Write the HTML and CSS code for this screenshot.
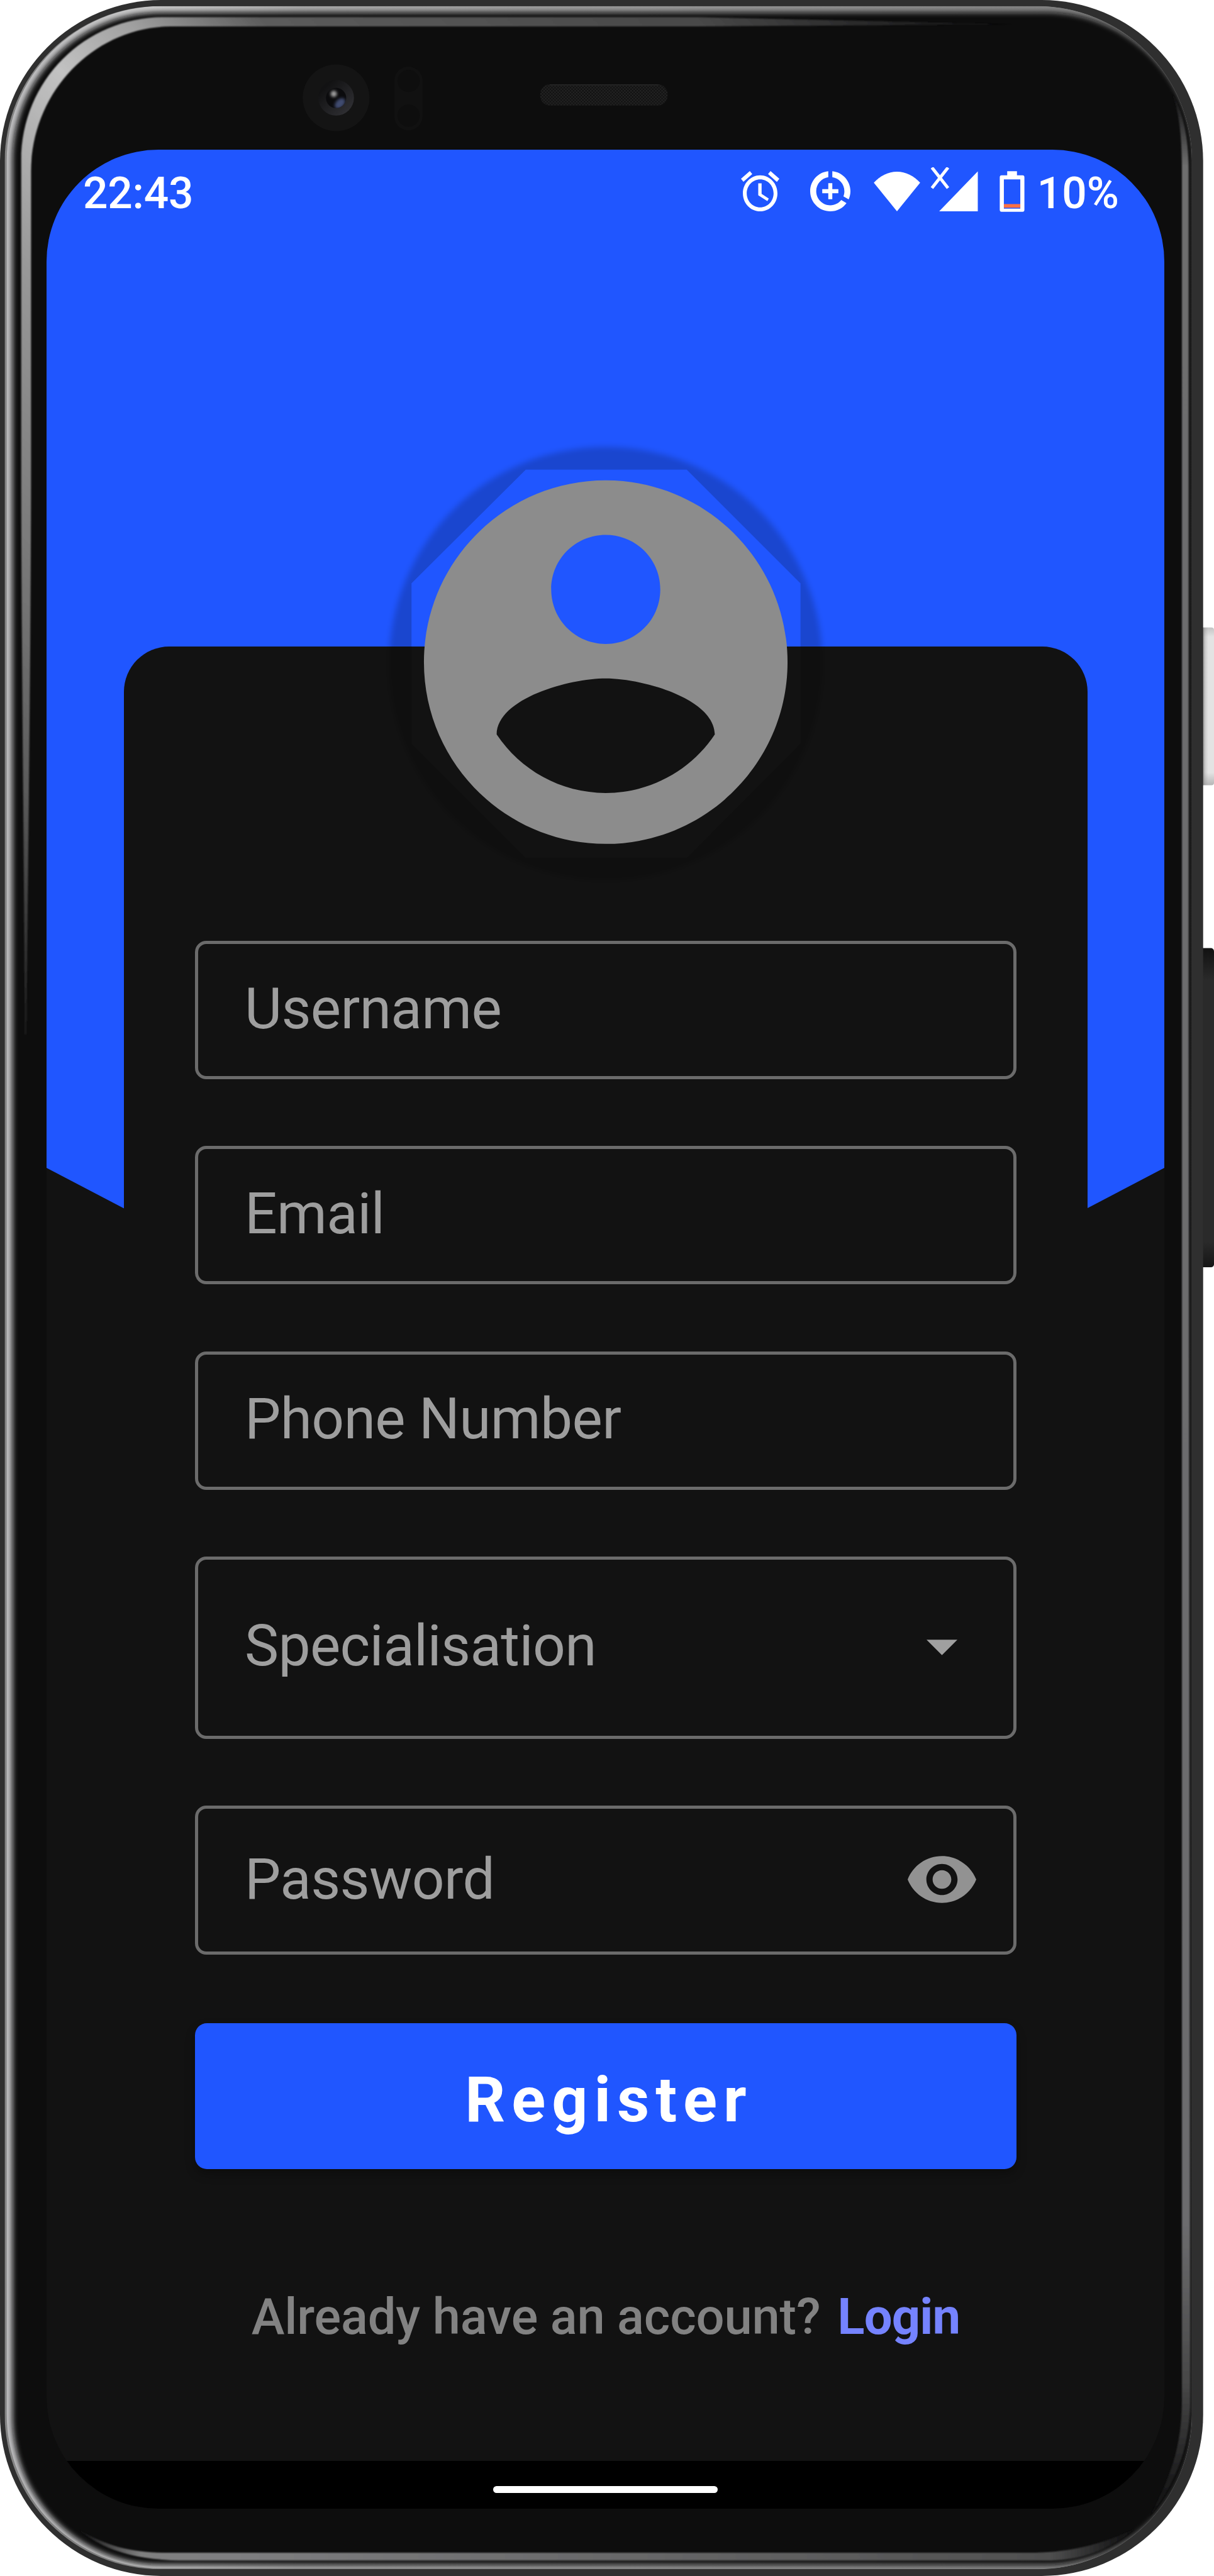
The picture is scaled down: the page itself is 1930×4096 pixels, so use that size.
FILE: index.html
```html
<!DOCTYPE html>
<html lang="en">
<head>
<meta charset="utf-8">
<title>Register</title>
<link rel="stylesheet" href="styles.css">
</head>
<body>
<div class="phone">
  <svg class="device" viewBox="0 0 2346 4980" preserveAspectRatio="none" aria-hidden="true">
    <defs>
      <linearGradient id="power" x1="2325" x2="2338" y1="0" y2="0" gradientUnits="userSpaceOnUse">
        <stop offset="0" stop-color="#9c9c9c"/><stop offset=".35" stop-color="#cdcdcd"/><stop offset=".75" stop-color="#e3e3e3"/>
      </linearGradient>
      <linearGradient id="powerEnds" x1="0" x2="0" y1="0" y2="1">
        <stop offset="0" stop-color="#888" stop-opacity=".35"/><stop offset=".06" stop-color="#888" stop-opacity="0"/>
        <stop offset=".92" stop-color="#888" stop-opacity="0"/><stop offset="1" stop-color="#888" stop-opacity=".5"/>
      </linearGradient>
      <linearGradient id="volume" x1="0" x2="0" y1="0" y2="1">
        <stop offset="0" stop-color="#111"/><stop offset=".1" stop-color="#2a2a2a"/><stop offset=".92" stop-color="#2a2a2a"/><stop offset="1" stop-color="#151515"/>
      </linearGradient>
      <linearGradient id="rim" x1="9" x2="2304" y1="0" y2="0" gradientUnits="userSpaceOnUse">
        <stop offset="0" stop-color="#bdbdbf"/><stop offset=".12" stop-color="#c8c8c8"/><stop offset=".25" stop-color="#a8a8a8"/><stop offset="1" stop-color="#7c7c7c"/>
      </linearGradient>
      <linearGradient id="bevelA" x1="50" y1="2000" x2="1960" y2="44" gradientUnits="userSpaceOnUse">
        <stop offset="0" stop-color="#1c1c1c"/><stop offset=".12" stop-color="#5a5a5a"/><stop offset=".21" stop-color="#727272"/><stop offset=".39" stop-color="#999"/>
        <stop offset=".505" stop-color="#c2c2c2"/><stop offset=".563" stop-color="#a0a0a0"/><stop offset=".63" stop-color="#5c5c5c"/>
        <stop offset=".845" stop-color="#484848"/><stop offset="1" stop-color="#0d0d0e"/>
      </linearGradient>
      <linearGradient id="bevelR" x1="0" y1="180" x2="0" y2="4864" gradientUnits="userSpaceOnUse">
        <stop offset="0" stop-color="#0d0d0e"/><stop offset=".03" stop-color="#6e6e6e"/><stop offset=".88" stop-color="#6c6c6e"/>
        <stop offset=".945" stop-color="#484848"/><stop offset="1" stop-color="#0d0d0e"/>
      </linearGradient>
      <linearGradient id="bevelB" x1="150" y1="0" x2="2190" y2="0" gradientUnits="userSpaceOnUse">
        <stop offset="0" stop-color="#0d0d0e"/><stop offset=".06" stop-color="#808080"/><stop offset=".15" stop-color="#7e7e80"/>
        <stop offset=".92" stop-color="#505050"/><stop offset="1" stop-color="#0d0d0e"/>
      </linearGradient>
      <linearGradient id="lens" x1="0" y1="0" x2="1" y2="1">
        <stop offset=".2" stop-color="#121213"/><stop offset=".9" stop-color="#303034"/>
      </linearGradient>
      <pattern id="mesh" width="6" height="6" patternUnits="userSpaceOnUse">
        <rect width="6" height="6" fill="#111"/><rect width="3" height="3" fill="#232323"/><rect x="3" y="3" width="3" height="3" fill="#232323"/>
      </pattern>
      <filter id="soft8" x="-5%" y="-5%" width="110%" height="110%"><feGaussianBlur stdDeviation="5"/></filter>
      <filter id="soft1" x="-5%" y="-5%" width="110%" height="110%"><feGaussianBlur stdDeviation="1"/></filter>
      <filter id="glow" x="-80%" y="-80%" width="260%" height="260%"><feGaussianBlur stdDeviation="2.5"/></filter>
      <clipPath id="rimClip"><rect x="9" y="12" width="2294.500" height="4955" rx="300"/></clipPath>
      <clipPath id="pupil"><circle cx="649.500" cy="189.500" r="19.500"/></clipPath>
    </defs>

    <!-- side keys -->
    <rect x="2318" y="1213" width="28" height="305" rx="5" fill="url(#power)"/>
    <rect x="2318" y="1213" width="28" height="305" rx="5" fill="url(#powerEnds)"/>
    <rect x="2318" y="1833" width="28" height="617" rx="6" fill="url(#volume)"/>

    <!-- body and polished rim -->
    <rect width="2325" height="4980" rx="312" fill="#2f2f2f"/>
    <g clip-path="url(#rimClip)">
      <rect x="9" y="12" width="2294.500" height="4955" fill="#858585"/>
      <rect x="13" y="12" width="2310" height="4953" rx="298" fill="url(#rim)"/>
      <rect x="24" y="24" width="2283" height="4934" rx="286" fill="#0d0d0e" filter="url(#soft8)"/>
    </g>

    <!-- inner bevel reflections -->
    <g filter="url(#soft1)">
      <path fill="url(#bevelA)" d="M48 2000C46 1600 41 1200 41 900V310C41 155 165 33 316 33H1350L1960 47L1350 51H330C181 52 60 178 60 332V900C60 1200 55 1600 51 2000Z"/>
      <path fill="url(#bevelR)" d="M2265 180C2280 220 2284 270 2284 330V4640C2284 4730 2262 4790 2221 4866C2280 4790 2300 4720 2300 4640L2297 2000V330C2297 260 2285 215 2265 180Z"/>
      <path fill="url(#bevelB)" d="M152 4890C205 4922 255 4935 320 4935H1988C2070 4935 2130 4918 2192 4889C2140 4932 2090 4950 2020 4950H357C275 4950 205 4935 152 4890Z"/>
    </g>

    <!-- camera, sensors, earpiece -->
    <circle cx="649.500" cy="189" r="64.500" fill="#141414"/>
    <circle cx="649.500" cy="189" r="34.500" fill="url(#lens)"/>
    <circle cx="649.500" cy="189.500" r="19.500" fill="#0b0b0d"/>
    <g clip-path="url(#pupil)">
      <ellipse cx="657" cy="200" rx="12" ry="8" transform="rotate(-45 657 200)" fill="#414b70" filter="url(#glow)"/>
      <circle cx="645" cy="181.500" r="6" fill="#a0a0a0" filter="url(#glow)"/>
    </g>
    <rect x="762" y="129" width="54.500" height="123" rx="27" fill="#111"/>
    <circle cx="789.500" cy="156.500" r="21.500" fill="#0e0e0e"/>
    <circle cx="789.500" cy="223.500" r="21.500" fill="#0e0e0e"/>
    <rect x="1044" y="163" width="246" height="41" rx="19" fill="url(#mesh)"/>
    <path d="M1062 164H1272" stroke="#2a2a2a" stroke-width="1.500"/>
  </svg>

  <main class="screen">
    <div class="backdrop"></div>

    <header class="status">
      <span class="clock">22:43</span>
      <div class="indicators">
        <svg class="ic-alarm" viewBox="2 1.860 20 20.140" preserveAspectRatio="none"><path d="M22 5.720l-4.600-3.860-1.290 1.530 4.600 3.860L22 5.720zM7.880 3.390L6.600 1.860 2 5.710l1.290 1.530 4.590-3.850zM12.500 8H11v6l4.750 2.850.750-1.230-3.750-2.370V8zM12 4c-4.970 0-9 4.030-9 9s4.020 9 9 9c4.970 0 9-4.030 9-9s-4.030-9-9-9zm0 16c-3.870 0-7-3.130-7-7s3.130-7 7-7 7 3.130 7 7-3.130 7-7 7z"/></svg>
        <svg class="ic-saver" viewBox="2 2 20 20"><path d="M13 2.050v3.030c3.390.490 6 3.390 6 6.920 0 .900-.180 1.750-.480 2.540l2.600 1.530c.560-1.240.880-2.620.880-4.070 0-5.180-3.950-9.450-9-9.950zM12 19c-3.870 0-7-3.130-7-7 0-3.530 2.610-6.430 6-6.920V2.050c-5.060.500-9 4.760-9 9.950 0 5.520 4.470 10 9.990 10 3.310 0 6.240-1.610 8.060-4.090l-2.600-1.530C16.170 17.980 14.210 19 12 19zM13 8h-2v3H8v2h3v3h2v-3h3v-2h-3z"/></svg>
        <svg class="ic-wifi" viewBox="1688 331 90 77"><path d="M1733 408L1688 352.500C1700 339 1716 331 1733 331S1766 339 1778 352.500Z"/></svg>
        <svg class="ic-signal" viewBox="1797 324 92 85"><path d="M1814 409L1888.500 332V409Z"/><path class="cross" d="M1800 324.500L1831 364M1831 324.500L1800 364"/></svg>
        <svg class="ic-battery" viewBox="1931 330 49 79"><path fill-rule="evenodd" d="M1946 330H1965V338H1976Q1979.500 338 1979.500 342V405Q1979.500 409 1976 409H1935Q1931.500 409 1931.500 405V342Q1931.500 338 1935 338H1946ZM1939.500 346V403H1971.500V346Z"/><path class="low" d="M1939.500 394H1971.500V401H1939.500Z"/></svg>
        <span class="level">10%</span>
      </div>
    </header>

    <form class="card">
      <svg class="avatar" viewBox="740 850 861 861">
        <defs>
          <filter id="avatarBlur"><feGaussianBlur stdDeviation="6"/></filter>
          <clipPath id="outsideOctagon"><path clip-rule="evenodd" d="M730 840H1611V1731H730ZM1016 908L795 1128V1438L1016 1659H1327L1547 1438V1128L1327 908Z"/></clipPath>
        </defs>
        <g clip-path="url(#outsideOctagon)"><circle cx="1170.500" cy="1283" r="419" fill="#000" fill-opacity=".19" filter="url(#avatarBlur)"/></g>
        <path fill="#8c8c8c" transform="translate(748.700 858.500) scale(35.150)" d="M12 2C6.480 2 2 6.480 2 12s4.480 10 10 10 10-4.480 10-10S17.520 2 12 2zm0 3c1.660 0 3 1.340 3 3s-1.340 3-3 3-3-1.340-3-3 1.340-3 3-3zm0 14.200c-2.500 0-4.710-1.280-6-3.220.030-1.990 4-3.080 6-3.080 1.990 0 5.970 1.090 6 3.080-1.290 1.940-3.500 3.220-6 3.220z"/>
      </svg>

      <div class="fields">
        <div class="field">Username</div>
        <div class="field">Email</div>
        <div class="field">Phone Number</div>
        <div class="field select">Specialisation
          <svg class="caret" viewBox="0 0 10 5"><path d="M0 0L5 5L10 0Z"/></svg>
        </div>
        <div class="field password">Password
          <svg class="eye" viewBox="1 4.500 22 15"><path d="M12 4.500C7 4.500 2.730 7.610 1 12c1.730 4.390 6 7.500 11 7.500s9.270-3.110 11-7.500c-1.730-4.390-6-7.500-11-7.500zM12 17c-2.760 0-5-2.240-5-5s2.240-5 5-5 5 2.240 5 5-2.240 5-5 5zm0-8c-1.660 0-3 1.340-3 3s1.340 3 3 3 3-1.340 3-3-1.340-3-3-3z"/></svg>
        </div>
      </div>

      <button class="register" type="button">Register</button>
      <p class="signin"><span>Already have an account?</span><a class="login">Login</a></p>
    </form>

    <nav class="gesture"><span class="pill"></span></nav>
  </main>
</div>
</body>
</html>
```

FILE: styles.css
```css
* { box-sizing: border-box; }

body {
  margin: 0;
  background: #fff;
  font-family: Roboto, "Noto Sans", sans-serif;
}

.phone {
  display: grid;
  width: 1930px;
  height: 4096px;
  overflow: hidden;
}

.device,
.screen { grid-area: 1 / 1; }

.device {
  display: block;
  width: 1930px;
  height: 4096px;
}

.screen {
  position: relative;
  display: flex;
  flex-direction: column;
  width: 1777px;
  height: 3751px;
  margin: 238px 0 0 74px;
  overflow: hidden;
  border-radius: 178px;
  background: #121212;
}

.backdrop {
  position: absolute;
  inset: 0;
  background: #2056ff;
  clip-path: polygon(0 0, 100% 0, 100% 1619px, 50% 2084px, 0 1619px);
}

/* status bar */
.status {
  position: relative;
  display: flex;
  flex: none;
  justify-content: space-between;
  align-items: center;
  height: 136px;
  padding: 0 72px 0 58px;
  color: #fff;
  font-size: 69.500px;
  font-weight: 500;
  line-height: 1;
}

.clock { padding-top: 4px; letter-spacing: -.2px; }
.level { padding-top: 8px; }

.indicators {
  display: flex;
  align-items: center;
  margin-top: -4px;
}

.indicators svg { display: block; fill: #fff; }
.ic-alarm { width: 61px; height: 64px; margin-right: 49px; }
.ic-saver { width: 64px; height: 64px; margin-right: 37px; }
.ic-wifi { width: 74px; height: 63px; margin-right: 16px; }
.ic-signal { width: 76px; height: 70px; margin: -6px 34px 0 0; }
.ic-battery { width: 40px; height: 65px; margin-right: 20px; }
.cross { fill: none; stroke: #fff; stroke-width: 6; }
.low { fill: #ff7043; }

/* form card */
.card {
  position: relative;
  display: flex;
  flex: none;
  flex-direction: column;
  width: 1532px;
  height: 2885px;
  margin: 654px 0 0 123px;
  padding: 0 113px;
  border-radius: 72px 72px 0 0;
  background: #121212;
}

.avatar {
  flex: none;
  align-self: center;
  width: 708px;
  height: 708px;
  margin-top: -329px;
  overflow: visible;
}

.fields {
  display: flex;
  flex-direction: column;
  gap: 106.400px;
  margin-top: 89px;
}

.field {
  display: flex;
  justify-content: space-between;
  align-items: center;
  height: 220px;
  padding: 0 74px 4px;
  border: 5px solid #6b6b6b;
  border-radius: 18px;
  color: #9e9e9e;
  font-size: 91px;
  line-height: 1;
  letter-spacing: -.6px;
}

.select { height: 289.500px; padding-right: 89px; padding-bottom: 4px; }
.password { height: 237px; padding-right: 59px; padding-bottom: 2px; }
.caret { width: 49px; height: 25px; margin-top: 3px; fill: #a0a0a0; }
.eye { width: 109px; height: 75px; fill: #929292; }

.register {
  height: 232px;
  margin: 109px 0 0;
  padding: 12px 0 0 10px;
  border: 0;
  border-radius: 19px;
  background: #2056ff;
  box-shadow: 0 8px 16px rgba(0, 0, 0, .3);
  color: #fff;
  font: 700 100px/1 Roboto, sans-serif;
  letter-spacing: 10px;
}

.signin {
  display: flex;
  justify-content: center;
  gap: 27px;
  margin: 188px 0 0;
  color: #828282;
  font-size: 79.500px;
  font-weight: 500;
  line-height: 94px;
  letter-spacing: -.15px;
  white-space: nowrap;
}

.login { color: #7583ff; font-weight: 700; letter-spacing: -.8px; }

/* gesture bar */
.gesture {
  position: relative;
  display: flex;
  flex: none;
  justify-content: center;
  align-items: center;
  height: 76px;
  padding-top: 14px;
  background: #000;
}

.pill {
  width: 357px;
  height: 11px;
  border-radius: 6px;
  background: #fff;
}
```
